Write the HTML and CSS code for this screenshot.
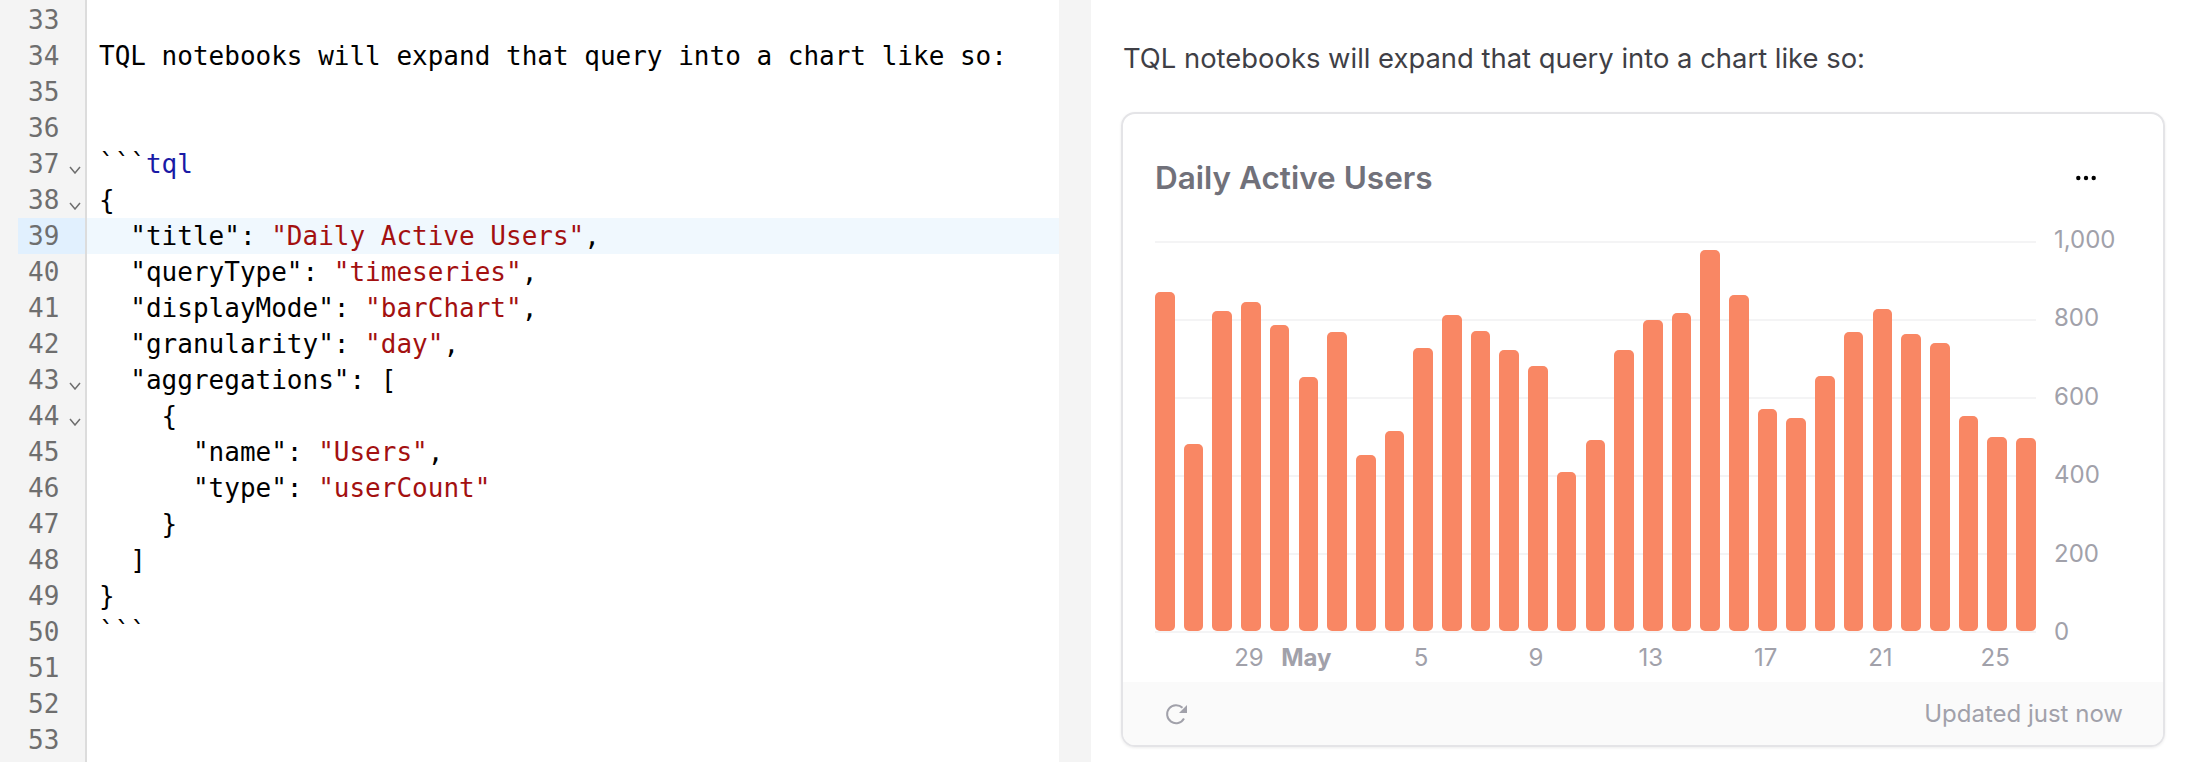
FILE: index.html
```html
<!DOCTYPE html>
<html lang="en">
<head>
  <meta charset="UTF-8" />
  <title>TQL notebook</title>
  <link rel="stylesheet" href="styles.css">
</head>
<body>
  <div class="app">
    <div class="editor">
      <div class="gutter">
        <div class="num">33</div>
        <div class="num">34</div>
        <div class="num">35</div>
        <div class="num">36</div>
        <div class="num">37<svg class="fold" viewBox="0 0 12 8"><path d="M1 1l5 6 5-6"/></svg></div>
        <div class="num">38<svg class="fold" viewBox="0 0 12 8"><path d="M1 1l5 6 5-6"/></svg></div>
        <div class="num active">39</div>
        <div class="num">40</div>
        <div class="num">41</div>
        <div class="num">42</div>
        <div class="num">43<svg class="fold" viewBox="0 0 12 8"><path d="M1 1l5 6 5-6"/></svg></div>
        <div class="num">44<svg class="fold" viewBox="0 0 12 8"><path d="M1 1l5 6 5-6"/></svg></div>
        <div class="num">45</div>
        <div class="num">46</div>
        <div class="num">47</div>
        <div class="num">48</div>
        <div class="num">49</div>
        <div class="num">50</div>
        <div class="num">51</div>
        <div class="num">52</div>
        <div class="num">53</div>
      </div>
      <div class="code">
        <div class="line"></div>
        <div class="line">TQL notebooks will expand that query into a chart like so:</div>
        <div class="line"></div>
        <div class="line"></div>
        <div class="line">```<span class="lang">tql</span></div>
        <div class="line">{</div>
        <div class="line active">  "title": <span class="str">"Daily Active Users"</span>,</div>
        <div class="line">  "queryType": <span class="str">"timeseries"</span>,</div>
        <div class="line">  "displayMode": <span class="str">"barChart"</span>,</div>
        <div class="line">  "granularity": <span class="str">"day"</span>,</div>
        <div class="line">  "aggregations": [</div>
        <div class="line">    {</div>
        <div class="line">      "name": <span class="str">"Users"</span>,</div>
        <div class="line">      "type": <span class="str">"userCount"</span></div>
        <div class="line">    }</div>
        <div class="line">  ]</div>
        <div class="line">}</div>
        <div class="line">```</div>
        <div class="line"></div>
        <div class="line"></div>
        <div class="line"></div>
      </div>
    </div>

    <div class="splitter"></div>

    <div class="preview">
      <p class="intro">TQL notebooks will expand that query into a chart like so:</p>
      <div class="card">
        <div class="card-head">
          <h2 class="card-title">Daily Active Users</h2>
          <svg class="more" viewBox="0 0 20 6"><circle cx="2.3" cy="3" r="2.2"/><circle cx="10" cy="3" r="2.2"/><circle cx="17.7" cy="3" r="2.2"/></svg>
        </div>
        <div class="chart">
          <div class="plot">
            <div class="grid-lines"><i></i><i></i><i></i><i></i><i></i><i></i></div>
            <div class="bars">
              <div class="bar" style="height:339px"></div>
              <div class="bar" style="height:187px"></div>
              <div class="bar" style="height:320px"></div>
              <div class="bar" style="height:329px"></div>
              <div class="bar" style="height:306px"></div>
              <div class="bar" style="height:254px"></div>
              <div class="bar" style="height:299px"></div>
              <div class="bar" style="height:176px"></div>
              <div class="bar" style="height:200px"></div>
              <div class="bar" style="height:283px"></div>
              <div class="bar" style="height:316px"></div>
              <div class="bar" style="height:300px"></div>
              <div class="bar" style="height:281px"></div>
              <div class="bar" style="height:265px"></div>
              <div class="bar" style="height:159px"></div>
              <div class="bar" style="height:191px"></div>
              <div class="bar" style="height:281px"></div>
              <div class="bar" style="height:311px"></div>
              <div class="bar" style="height:318px"></div>
              <div class="bar" style="height:381px"></div>
              <div class="bar" style="height:336px"></div>
              <div class="bar" style="height:222px"></div>
              <div class="bar" style="height:213px"></div>
              <div class="bar" style="height:255px"></div>
              <div class="bar" style="height:299px"></div>
              <div class="bar" style="height:322px"></div>
              <div class="bar" style="height:297px"></div>
              <div class="bar" style="height:288px"></div>
              <div class="bar" style="height:215px"></div>
              <div class="bar" style="height:194px"></div>
              <div class="bar" style="height:193px"></div>
            </div>
          </div>
          <div class="y-axis">
            <span>1,000</span>
            <span>800</span>
            <span>600</span>
            <span>400</span>
            <span>200</span>
            <span>0</span>
          </div>
          <div class="x-axis">
            <span></span><span></span><span></span><span>29</span>
            <span></span><span class="month">May</span><span></span><span></span>
            <span></span><span>5</span><span></span><span></span>
            <span></span><span>9</span><span></span><span></span>
            <span></span><span>13</span><span></span><span></span>
            <span></span><span>17</span><span></span><span></span>
            <span></span><span>21</span><span></span><span></span>
            <span></span><span>25</span><span></span>
          </div>
        </div>
        <div class="card-foot">
          <svg class="refresh" viewBox="0 0 24 24"><path class="arc" d="M18.5 5.8A9 9 0 1 0 20 16.5"/><path class="head" d="M23 3v8h-8z"/></svg>
          <span class="updated">Updated just now</span>
        </div>
      </div>
    </div>
  </div>
</body>
</html>
```

FILE: styles.css
```css
html, body {
  margin: 0;
  height: 100%;
  overflow: hidden;
  background: #fff;
}
.app {
  display: flex;
  height: 762px;
}

/* editor */
.editor {
  width: 1059px;
  flex: none;
  display: flex;
  font-family: "DejaVu Sans Mono", monospace;
  overflow: hidden;
}
.gutter {
  width: 85px;
  flex: none;
  padding-top: 2px;
  background: #f4f4f4;
  border-right: 2px solid #dcdcdc;
}
.num {
  height: 36px;
  line-height: 36px;
  padding-left: 28px;
  font-size: 26px;
  color: #6e6e6e;
  display: flex;
}
.num.active {
  margin-left: 18px;
  padding-left: 10px;
  background: #e1f0fe;
}
.fold {
  width: 12px;
  height: 8px;
  margin: 20px 0 0 10px;
  fill: none;
  stroke: #6e6e6e;
  stroke-width: 1.5;
}
.code {
  flex: 1;
  padding-top: 2px;
}
.line {
  height: 36px;
  line-height: 36px;
  padding-left: 12px;
  font-size: 26px;
  color: #000;
  white-space: pre;
}
.line.active {
  background: #f0f8fe;
}
.lang {
  color: #1a1aa6;
}
.str {
  color: #a31010;
}

.splitter {
  width: 32px;
  flex: none;
  background: #f4f4f4;
}

/* preview */
.preview {
  flex: 1;
  padding: 0 21px 0 30px;
  font-family: Inter, sans-serif;
}
.intro {
  margin: 0;
  padding-top: 40px;
  height: 72px;
  line-height: 36px;
  font-size: 27.4px;
  color: #3f3f46;
  box-sizing: border-box;
  padding-left: 2px;
}
.card {
  margin-top: 40px;
  height: 635px;
  box-sizing: border-box;
  border: 2px solid #e4e4e7;
  border-radius: 14px;
  box-shadow: 0 1px 3px rgba(0, 0, 0, 0.08);
  display: flex;
  flex-direction: column;
  overflow: hidden;
}
.card-head {
  height: 127px;
  flex: none;
  padding: 44px 67px 0 32px;
  box-sizing: border-box;
  display: flex;
  justify-content: space-between;
}
.card-title {
  margin: 0;
  font-size: 31.5px;
  line-height: 40px;
  font-weight: 600;
  color: #71717a;
}
.more {
  width: 20px;
  height: 6px;
  margin-top: 17px;
  fill: #000;
}

/* chart */
.chart {
  padding-left: 32px;
  display: grid;
  grid-template-columns: 881px auto;
  column-gap: 18px;
}
.plot {
  height: 392px;
  display: grid;
}
.grid-lines, .bars {
  grid-area: 1 / 1;
}
.grid-lines {
  display: flex;
  flex-direction: column;
  justify-content: space-between;
}
.grid-lines i {
  display: block;
  height: 2px;
  background: #f4f4f5;
}
.bars {
  display: flex;
  justify-content: space-between;
  align-items: flex-end;
  padding-bottom: 2px;
}
.bar {
  width: 19.6px;
  background: #f98764;
  border-radius: 5px;
}
.y-axis {
  margin: -15px 0 -13px;
  display: flex;
  flex-direction: column;
  justify-content: space-between;
  font-size: 24px;
  line-height: 28px;
  color: #a1a1aa;
}
.x-axis {
  height: 49px;
  margin: 0 2px 0 -2px;
  display: flex;
  justify-content: space-between;
  align-items: center;
  font-size: 24px;
  color: #a1a1aa;
}
.x-axis span {
  width: 19.6px;
  display: flex;
  justify-content: center;
  white-space: nowrap;
}
.month {
  font-weight: 700;
}

.card-foot {
  flex: 1;
  background: #fafafa;
  display: flex;
  justify-content: space-between;
  align-items: center;
  padding: 0 40px 0 41px;
}
.refresh {
  width: 24px;
  height: 24px;
}
.refresh .arc {
  fill: none;
  stroke: #a1a1aa;
  stroke-width: 2;
}
.refresh .head {
  fill: #a1a1aa;
}
.updated {
  font-size: 24px;
  color: #a1a1aa;
}
```
